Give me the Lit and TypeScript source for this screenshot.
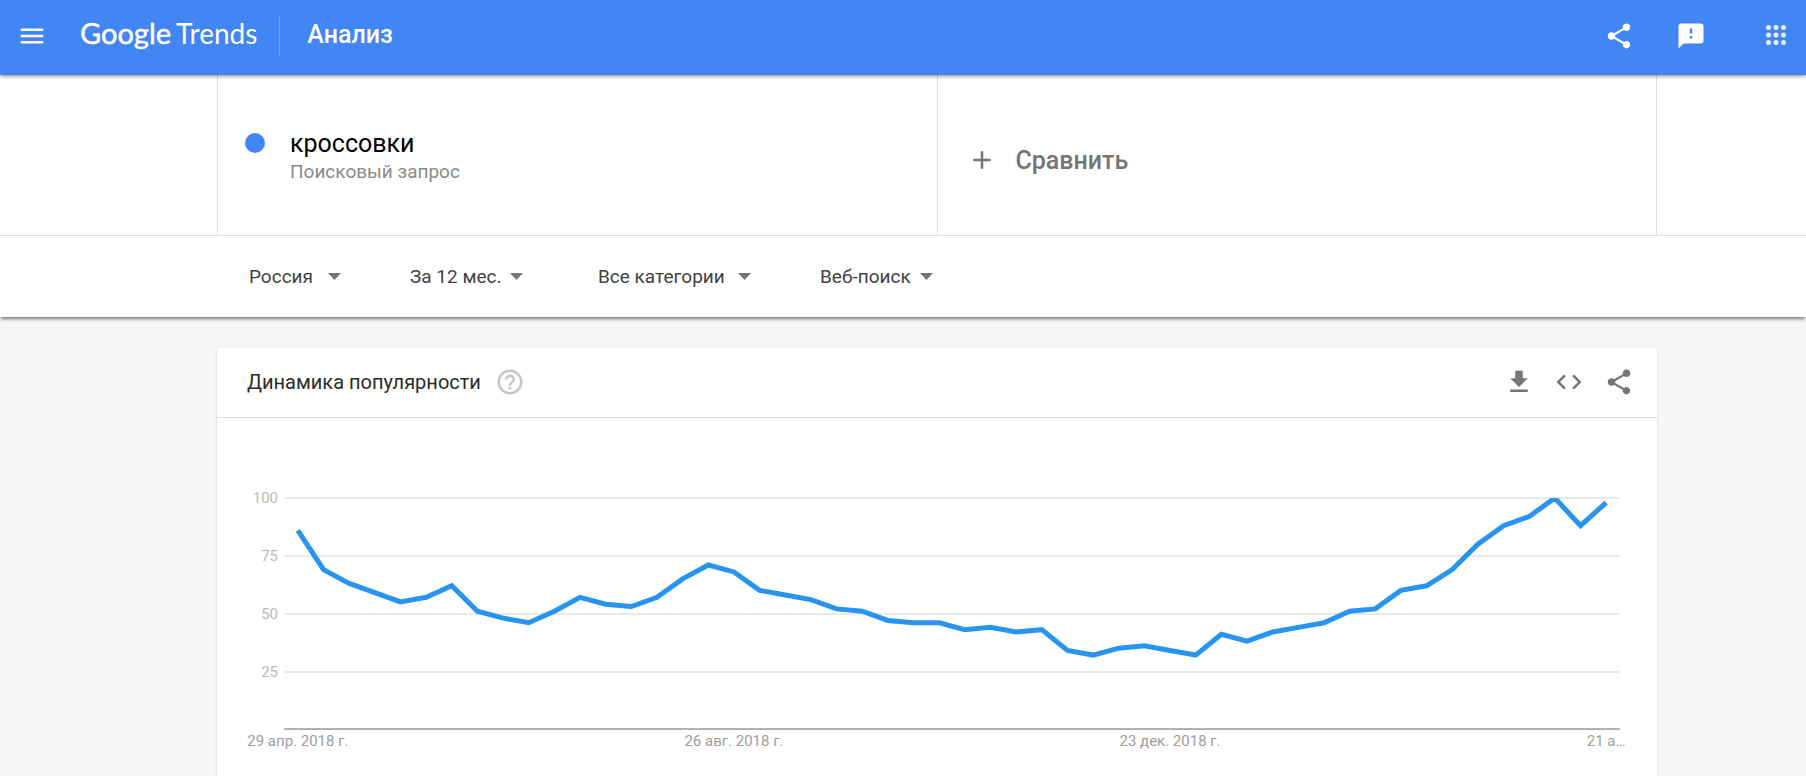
import { LitElement, html, svg, css } from "lit";
import { customElement, property } from "lit/decorators.js";

const ICONS: Record<string, string> = {
  menu: "M3 18h18v-2H3v2zm0-5h18v-2H3v2zm0-7v2h18V6H3z",
  share:
    "M18 16.08c-.76 0-1.44.3-1.96.77L8.91 12.7c.05-.23.09-.46.09-.7s-.04-.47-.09-.7l7.05-4.11c.54.5 1.25.81 2.04.81 1.66 0 3-1.34 3-3s-1.34-3-3-3-3 1.34-3 3c0 .24.04.47.09.7L8.04 9.81C7.5 9.31 6.79 9 6 9c-1.66 0-3 1.34-3 3s1.34 3 3 3c.79 0 1.5-.31 2.04-.81l7.12 4.16c-.05.21-.08.43-.08.65 0 1.61 1.31 2.92 2.92 2.92s2.92-1.31 2.92-2.92-1.31-2.92-2.92-2.92z",
  feedback:
    "M20 2H4c-1.1 0-1.99.9-1.99 2L2 22l4-4h14c1.1 0 2-.9 2-2V4c0-1.1-.9-2-2-2zm-7 12h-2v-2h2v2zm0-4h-2V6h2v4z",
  apps:
    "M6 4a2 2 0 100 4 2 2 0 000-4zm6 0a2 2 0 100 4 2 2 0 000-4zm6 0a2 2 0 100 4 2 2 0 000-4zM6 10a2 2 0 100 4 2 2 0 000-4zm6 0a2 2 0 100 4 2 2 0 000-4zm6 0a2 2 0 100 4 2 2 0 000-4zM6 16a2 2 0 100 4 2 2 0 000-4zm6 0a2 2 0 100 4 2 2 0 000-4zm6 0a2 2 0 100 4 2 2 0 000-4z",
  add: "M19 13h-6v6h-2v-6H5v-2h6V5h2v6h6v2z",
  help:
    "M11 18h2v-2h-2v2zm1-16C6.48 2 2 6.48 2 12s4.48 10 10 10 10-4.48 10-10S17.52 2 12 2zm0 18c-4.41 0-8-3.59-8-8s3.59-8 8-8 8 3.59 8 8-3.59 8-8 8zm0-14c-2.21 0-4 1.79-4 4h2c0-1.1.9-2 2-2s2 .9 2 2c0 2-3 1.75-3 5h2c0-2.25 3-2.5 3-5 0-2.21-1.79-4-4-4z",
  download: "M19 9h-4V3H9v6H5l7 7 7-7zM5 18v2h14v-2H5z",
  code: "M9.4 16.6L4.8 12l4.6-4.6L8 6l-6 6 6 6 1.4-1.4zm5.2 0l4.6-4.6-4.6-4.6L16 6l6 6-6 6-1.4-1.4z",
};

const VALUES = [
  86, 69, 63, 59, 55, 57, 62, 51, 48, 46, 51, 57, 54, 53, 57, 65, 71, 68, 60,
  58, 56, 52, 51, 47, 46, 46, 43, 44, 42, 43, 34, 32, 35, 36, 34, 32, 41, 38,
  42, 44, 46, 51, 52, 60, 62, 69, 80, 88, 92, 100, 88, 98,
];

const DATES = [
  { week: 0, text: "29 апр. 2018 г." },
  { week: 17, text: "26 авг. 2018 г." },
  { week: 34, text: "23 дек. 2018 г." },
  { week: 51, text: "21 а…" },
];

const FILTERS = [
  { id: "geo", name: "Регион", value: "Россия", size: "short" },
  { id: "time", name: "Период", value: "За 12 мес.", size: "medium" },
  { id: "category", name: "Категория", value: "Все категории", size: "long" },
  { id: "source", name: "Источник", value: "Веб-поиск", size: "medium" },
];

@customElement("trend-icon")
class TrendIcon extends LitElement {
  @property() name = "";

  static styles = css`
    :host {
      display: block;
      width: 30px;
      height: 30px;
    }
    svg {
      display: block;
      width: 100%;
      height: 100%;
      fill: currentColor;
    }
  `;

  render() {
    return html`<svg viewBox="0 0 24 24" aria-hidden="true"><path d=${ICONS[this.name]}></path></svg>`;
  }
}

@customElement("trend-chart")
class TrendChart extends LitElement {
  static styles = css`
    :host {
      display: grid;
      grid-template-columns: 61px 1fr;
      column-gap: 6px;
      font-size: 15px;
      line-height: 18px;
    }
    .scale {
      display: flex;
      flex-direction: column;
      color: #bababa;
      text-align: right;
      margin-top: -9px;
    }
    .tick {
      height: 58px;
    }
    .plot {
      display: block;
      width: 100%;
      height: 256px;
      overflow: visible;
    }
    .grid {
      stroke: #e3e3e3;
      stroke-width: 1.5;
    }
    .axis {
      stroke: #b3b3b3;
      stroke-width: 2;
    }
    .series {
      fill: none;
      stroke: #2795f0;
      stroke-width: 5;
      vector-effect: non-scaling-stroke;
    }
    .date {
      fill: #9e9e9e;
      text-anchor: middle;
    }
  `;

  // Half a week is left free at both ends of the axis.
  private x(week: number) {
    return ((week + 0.54) / (VALUES.length - 1 + 1.08)) * 1000;
  }

  render() {
    const points = VALUES.map((v, i) => `${this.x(i)},${(100 - v) * 2.31}`).join(" ");
    return html`
      <div class="scale">
        ${[100, 75, 50, 25].map((n) => html`<span class="tick">${n}</span>`)}
      </div>
      <svg class="plot" role="img" aria-label="Динамика популярности">
        ${[0, 58, 116, 174].map((y) => svg`<line class="grid" x1="0" x2="100%" y1=${y} y2=${y}></line>`)}
        <line class="axis" x1="0" x2="100%" y1="231" y2="231"></line>
        <svg width="100%" height="232" viewBox="0 0 1000 232" preserveAspectRatio="none">
          <polyline class="series" points=${points}></polyline>
        </svg>
        ${DATES.map((d) => svg`<text class="date" x="${this.x(d.week) / 10}%" y="248">${d.text}</text>`)}
      </svg>
    `;
  }
}

@customElement("app-root")
class AppRoot extends LitElement {
  static styles = css`
    :host {
      display: flex;
      flex-direction: column;
      min-height: 100vh;
      background: #f6f6f6;
      color: #212121;
      font-family: Roboto, "Noto Sans", sans-serif;
    }
    * {
      box-sizing: border-box;
    }
    button {
      display: flex;
      align-items: center;
      border: 0;
      padding: 0;
      background: none;
      color: inherit;
      font: inherit;
      cursor: pointer;
    }
    .bar {
      position: relative;
      z-index: 1;
      display: flex;
      align-items: center;
      height: 75px;
      padding: 0 15px 3px 17px;
      background: #4285f4;
      color: #fff;
      box-shadow: 0 1px 4px rgba(0, 0, 0, 0.5);
    }
    .logo {
      display: flex;
      align-items: baseline;
      gap: 5px;
      margin-left: 33px;
      padding-bottom: 6px;
      color: #fff;
      font-family: Lato, sans-serif;
      line-height: 40px;
      text-decoration: none;
    }
    .brand {
      font-size: 29px;
      -webkit-text-stroke: 0.5px #fff;
    }
    .product {
      font-size: 28px;
    }
    .section {
      margin: 0 auto 0 22px;
      padding: 0 0 2px 27px;
      border-left: 1px solid #6ba0f6;
      font-size: 25px;
      font-weight: 500;
      line-height: 38px;
    }
    .feedback {
      margin: 0 55px 0 42px;
    }
    .apps {
      padding-bottom: 2px;
      opacity: 0.87;
    }
    .band {
      padding: 0 149px 0 217px;
      background: #fff;
    }
    .terms {
      border-bottom: 1px solid #dedede;
    }
    .cells {
      display: grid;
      grid-template-columns: 1fr 1fr;
      height: 160px;
      border-right: 1px solid #dedede;
    }
    .cell {
      display: flex;
      border-left: 1px solid #dedede;
    }
    .term {
      gap: 25px;
      padding: 55px 27px 0;
    }
    .dot {
      width: 20px;
      height: 20px;
      margin-top: 3px;
      border-radius: 50%;
      background: #4285f4;
    }
    .query {
      color: #000;
      font-size: 25px;
      line-height: 28px;
    }
    .kind {
      color: #8a8a8a;
      font-size: 19px;
      line-height: 28px;
    }
    .compare {
      gap: 19px;
      padding: 10px 29px 0;
      color: #757575;
      font-size: 25px;
      font-weight: 500;
    }
    .filters {
      position: relative;
      display: grid;
      grid-template-columns: 161px 188px 222px auto;
      align-items: center;
      height: 81px;
      padding-left: 249px;
      box-shadow: 0 3px 3px -1px rgba(0, 0, 0, 0.5);
    }
    .filter {
      display: grid;
      align-items: center;
    }
    .short {
      width: 92px;
    }
    .medium {
      width: 113px;
    }
    .long {
      width: 153px;
    }
    .filter select,
    .filter .arrow {
      grid-area: 1 / 1;
    }
    .filter select {
      appearance: none;
      width: 100%;
      border: 0;
      padding: 0;
      background: none;
      color: #424242;
      font: 19px/26px Roboto, "Noto Sans", sans-serif;
    }
    .arrow {
      justify-self: end;
      width: 13px;
      height: 7px;
      fill: #757575;
      pointer-events: none;
    }
    .main {
      display: flex;
      flex: 1;
      padding: 31px 149px 0 217px;
    }
    .card {
      flex: 1;
      border-radius: 3px 3px 0 0;
      background: #fff;
      box-shadow: 0 1px 3px rgba(0, 0, 0, 0.14);
    }
    .head {
      display: flex;
      align-items: center;
      height: 70px;
      padding: 0 23px 1px 30px;
      border-bottom: 1px solid #dedede;
      color: #757575;
    }
    .title {
      margin: 0;
      color: #2b2b2b;
      font-size: 20px;
      font-weight: 400;
      line-height: 26px;
    }
    .help {
      margin: 0 auto 0 14px;
      color: #c6c6c6;
    }
    .tools {
      display: flex;
      gap: 20px;
    }
    .chart {
      padding: 80px 37px 0 0;
    }
  `;

  render() {
    return html`
      <header class="bar">
        <button aria-label="Меню"><trend-icon name="menu"></trend-icon></button>
        <a class="logo" href="#"><span class="brand">Google</span><span class="product">Trends</span></a>
        <span class="section">Анализ</span>
        <button aria-label="Поделиться"><trend-icon name="share"></trend-icon></button>
        <button class="feedback" aria-label="Отзыв"><trend-icon name="feedback"></trend-icon></button>
        <button class="apps" aria-label="Приложения"><trend-icon name="apps"></trend-icon></button>
      </header>
      <section class="band terms">
        <div class="cells">
          <div class="cell term">
            <span class="dot"></span>
            <div>
              <div class="query">кроссовки</div>
              <div class="kind">Поисковый запрос</div>
            </div>
          </div>
          <div class="cell">
            <button class="compare"><trend-icon name="add"></trend-icon>Сравнить</button>
          </div>
        </div>
      </section>
      <section class="band filters">
        ${FILTERS.map(
          (f) => html`<div class="filter ${f.size}">
            <select id=${f.id} aria-label=${f.name}>
              <option>${f.value}</option>
            </select>
            <svg class="arrow" viewBox="0 0 13 7" aria-hidden="true"><path d="M0 0h13L6.5 7z"></path></svg>
          </div>`
        )}
      </section>
      <main class="main">
        <section class="card">
          <div class="head">
            <h1 class="title">Динамика популярности</h1>
            <button class="help" aria-label="Справка"><trend-icon name="help"></trend-icon></button>
            <div class="tools">
              <button aria-label="Скачать"><trend-icon name="download"></trend-icon></button>
              <button aria-label="Встроить"><trend-icon name="code"></trend-icon></button>
              <button aria-label="Поделиться"><trend-icon name="share"></trend-icon></button>
            </div>
          </div>
          <div class="chart"><trend-chart></trend-chart></div>
        </section>
      </main>
    `;
  }
}
